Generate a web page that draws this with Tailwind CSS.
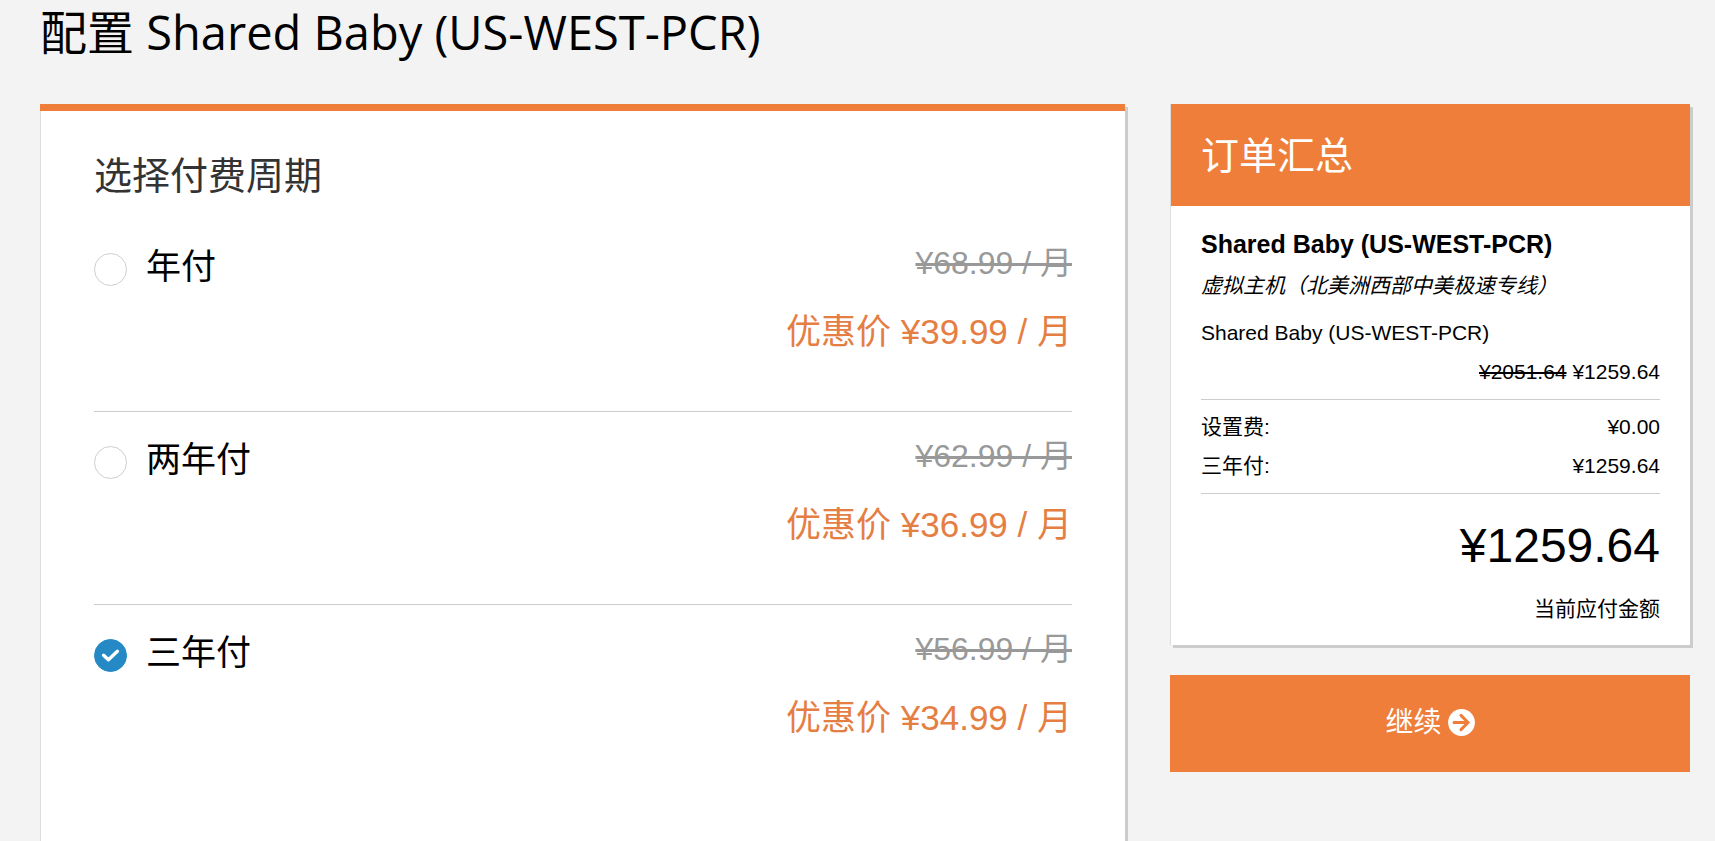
<!DOCTYPE html>
<html lang="zh-CN">
<head>
<meta charset="utf-8">
<meta name="viewport" content="width=device-width, initial-scale=1">
<title>配置 Shared Baby (US-WEST-PCR)</title>
<script src="https://cdn.jsdelivr.net/npm/@tailwindcss/browser@4"></script>
</head>
<body class="min-h-screen bg-[#f3f3f3] pl-10 pr-[25px] font-['Liberation_Sans','Noto_Sans_CJK_SC',sans-serif] text-black">
<div class="flex min-h-screen flex-col">
  <h1 class="h-[104px] text-[47px] leading-[64px] font-['Open_Sans','Noto_Sans_CJK_SC',sans-serif]">配置 Shared Baby (US-WEST-PCR)</h1>
  <div class="grid grow grid-cols-[1fr_520px] gap-[45px]">
    <main class="border-t-7 border-t-[#ee7e3a] bg-white pt-[37px] pr-[53px] pl-[54px] shadow-[3px_3px_0_#ccc,inset_1px_0_0_#ddd]">
      <form id="order">
        <fieldset>
          <legend class="mb-[15px] text-[38px] leading-[56px] text-[#333]">选择付费周期</legend>

          <label class="flex items-start border-b border-[#ccc] pt-5 pb-[55px]">
            <span class="mt-[14px] mr-[19px] grid">
              <input type="radio" name="cycle" value="1" class="peer col-start-1 row-start-1 size-[33px] appearance-none rounded-full border border-[#d0cec9] bg-white checked:border-[#2489c5] checked:bg-[#2489c5]">
              <svg viewBox="0 0 33 33" class="pointer-events-none invisible col-start-1 row-start-1 size-[33px] peer-checked:visible" fill="none" stroke="#fff" stroke-width="3.4" stroke-linecap="round" stroke-linejoin="round"><path d="M9.6 16.2 14.4 20.8 23.4 12.2"/></svg>
            </span>
            <span class="grow text-[35px] leading-[56px]">年付</span>
            <span class="flex flex-col items-end gap-[21px] leading-[48px]">
              <s class="text-[32px] text-[#999] decoration-3">¥68.99 / 月</s>
              <span class="text-[35px] text-[#e57e43]">优惠价 ¥39.99 / 月</span>
            </span>
          </label>

          <label class="flex items-start border-b border-[#ccc] pt-5 pb-[55px]">
            <span class="mt-[14px] mr-[19px] grid">
              <input type="radio" name="cycle" value="2" class="peer col-start-1 row-start-1 size-[33px] appearance-none rounded-full border border-[#d0cec9] bg-white checked:border-[#2489c5] checked:bg-[#2489c5]">
              <svg viewBox="0 0 33 33" class="pointer-events-none invisible col-start-1 row-start-1 size-[33px] peer-checked:visible" fill="none" stroke="#fff" stroke-width="3.4" stroke-linecap="round" stroke-linejoin="round"><path d="M9.6 16.2 14.4 20.8 23.4 12.2"/></svg>
            </span>
            <span class="grow text-[35px] leading-[56px]">两年付</span>
            <span class="flex flex-col items-end gap-[21px] leading-[48px]">
              <s class="text-[32px] text-[#999] decoration-3">¥62.99 / 月</s>
              <span class="text-[35px] text-[#e57e43]">优惠价 ¥36.99 / 月</span>
            </span>
          </label>

          <label class="flex items-start pt-5 pb-[55px]">
            <span class="mt-[14px] mr-[19px] grid">
              <input type="radio" name="cycle" value="3" checked class="peer col-start-1 row-start-1 size-[33px] appearance-none rounded-full border border-[#d0cec9] bg-white checked:border-[#2489c5] checked:bg-[#2489c5]">
              <svg viewBox="0 0 33 33" class="pointer-events-none invisible col-start-1 row-start-1 size-[33px] peer-checked:visible" fill="none" stroke="#fff" stroke-width="3.4" stroke-linecap="round" stroke-linejoin="round"><path d="M9.6 16.2 14.4 20.8 23.4 12.2"/></svg>
            </span>
            <span class="grow text-[35px] leading-[56px]">三年付</span>
            <span class="flex flex-col items-end gap-[21px] leading-[48px]">
              <s class="text-[32px] text-[#999] decoration-3">¥56.99 / 月</s>
              <span class="text-[35px] text-[#e57e43]">优惠价 ¥34.99 / 月</span>
            </span>
          </label>
        </fieldset>
      </form>
    </main>

    <aside>
      <section class="border-l border-[#ddd] bg-white shadow-[3px_3px_0_#ccc]">
        <h2 class="bg-[#ee7e3a] px-[30px] pt-[25px] pb-[23px] text-[38px] leading-[54px] text-white">订单汇总</h2>
        <div class="px-[30px] pt-5 pb-[18px] text-[21px]">
          <h3 class="text-[25px] leading-[36px] font-bold">Shared Baby (US-WEST-PCR)</h3>
          <p class="mt-1.5 leading-[36px] whitespace-nowrap italic">虚拟主机（北美洲西部中美极速专线）</p>
          <div class="mt-[9px] border-b border-[#ccc] pb-2 leading-[39px]">
            <p>Shared Baby (US-WEST-PCR)</p>
            <p class="text-right"><s class="decoration-2">¥2051.64</s> ¥1259.64</p>
          </div>
          <dl class="grid grid-cols-[1fr_auto] border-b border-[#ccc] pt-[7px] pb-2 leading-[39px]">
            <dt>设置费:</dt><dd class="text-right">¥0.00</dd>
            <dt>三年付:</dt><dd class="text-right">¥1259.64</dd>
          </dl>
          <p class="pt-4 text-right text-[48px] leading-[72px]">¥1259.64</p>
          <p class="mt-[9px] text-right leading-[36px]">当前应付金额</p>
        </div>
      </section>
      <button type="submit" form="order" class="mt-[30px] flex h-[97px] w-full items-center justify-center gap-1.5 bg-[#ee7e3a] pb-0.5 text-[28px] text-white">
        继续
        <svg viewBox="0 0 27 27" class="size-[27px]" fill="none" aria-hidden="true"><circle cx="13.5" cy="13.5" r="13.4" fill="#fff"/><path d="M6 13.5H19.5M13 6.4 20 13.5 13 20.6" stroke="#ee7e3a" stroke-width="3" stroke-linecap="round"/></svg>
      </button>
    </aside>
  </div>
</div>
</body>
</html>
